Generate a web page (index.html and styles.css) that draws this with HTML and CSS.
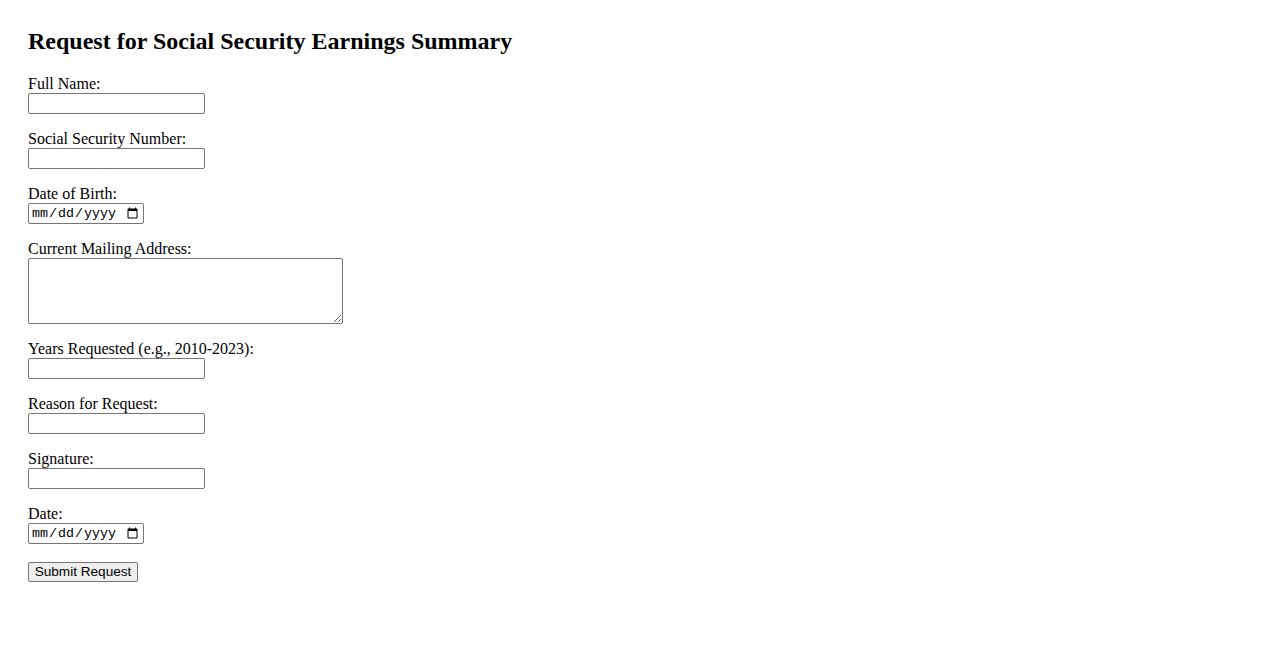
FILE: index.html
```html
<!DOCTYPE html>
<html lang="en">
<head>
<meta charset="utf-8">
<title>Request for Social Security Earnings Summary</title>
<link rel="stylesheet" href="styles.css">
</head>
<body>
<div class="page">
  <h2 class="title">Request for Social Security Earnings Summary</h2>
  <form class="form">
    <div class="field">
      <label class="label" for="name">Full Name:</label>
      <input class="text" type="text" id="name">
    </div>
    <div class="field">
      <label class="label" for="ssn">Social Security Number:</label>
      <input class="text" type="text" id="ssn">
    </div>
    <div class="field">
      <label class="label" for="dob">Date of Birth:</label>
      <input class="date" type="date" id="dob">
    </div>
    <div class="field">
      <label class="label" for="addr">Current Mailing Address:</label>
      <textarea class="area" id="addr"></textarea>
    </div>
    <div class="field">
      <label class="label" for="years">Years Requested (e.g., 2010-2023):</label>
      <input class="text" type="text" id="years">
    </div>
    <div class="field">
      <label class="label" for="reason">Reason for Request:</label>
      <input class="text" type="text" id="reason">
    </div>
    <div class="field">
      <label class="label" for="sig">Signature:</label>
      <input class="text" type="text" id="sig">
    </div>
    <div class="field field-last">
      <label class="label" for="date">Date:</label>
      <input class="date" type="date" id="date">
    </div>
    <button class="submit" type="submit">Submit Request</button>
  </form>
</div>
</body>
</html>
```

FILE: styles.css
```css
html, body {
  background: #ffffff;
}
body {
  margin: 0;
  font-family: "Liberation Serif", "Times New Roman", serif;
  font-size: 16px;
  color: #000000;
}
.page {
  padding: 27px 28px 28px 28px;
}
.title {
  margin: 0 0 20px 0;
  font-size: 24px;
  font-weight: bold;
  line-height: 28px;
}
.form {
  display: flex;
  flex-direction: column;
  align-items: flex-start;
}
.field {
  display: flex;
  flex-direction: column;
  align-items: flex-start;
  margin-bottom: 16px;
}
.field-last {
  margin-bottom: 18px;
}
.label {
  display: block;
  line-height: 18px;
  height: 18px;
}
.text {
  box-sizing: border-box;
  width: 177px;
  height: 21px;
  margin: 0;
  padding: 1px 2px;
  border: 1px solid #767676;
  border-radius: 2px;
  font-family: "Liberation Sans", Arial, sans-serif;
  font-size: 13.33px;
  background: #ffffff;
}
.date {
  box-sizing: border-box;
  width: 116px;
  height: 21px;
  margin: 0;
  padding: 1px 2px;
  border: 1px solid #767676;
  border-radius: 2px;
  font-family: "Liberation Mono", "DejaVu Sans Mono", monospace;
  font-size: 13.33px;
  background: #ffffff;
}
.area {
  box-sizing: border-box;
  width: 315px;
  height: 66px;
  margin: 0;
  padding: 2px;
  border: 1px solid #767676;
  border-radius: 2px;
  font-family: "Liberation Mono", monospace;
  font-size: 13.33px;
  background: #ffffff;
}
.submit {
  box-sizing: border-box;
  width: 110px;
  height: 20px;
  margin: 0;
  padding: 0;
  border: 1px solid #767676;
  border-radius: 2px;
  background: #efefef;
  font-family: "Liberation Sans", Arial, sans-serif;
  font-size: 13.6px;
  color: #000000;
  line-height: 16px;
  text-align: center;
}
```
